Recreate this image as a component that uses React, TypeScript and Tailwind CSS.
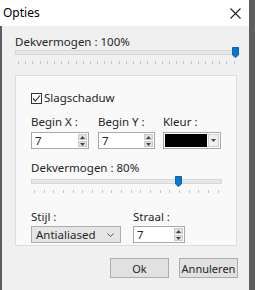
import React from 'react';

const Thumb = () => (
  <svg width="7" height="11" viewBox="0 0 7 11" className="absolute top-0">
    <path d="M0.5 0.5 H6.5 V8 L3.5 10.5 L0.5 8 Z" fill="#0078d7" stroke="#1b5ea6" strokeWidth="1" />
  </svg>
);

type SliderProps = { width: number; ticks: number; pos: number };

const Slider = ({ width, ticks, pos }: SliderProps) => {
  return (
    <div className="flex flex-col" style={{ width }}>
      <div className="relative h-[11px]">
        <div className="absolute left-0 right-0 top-[3px] h-[5px] bg-[#e7e7e7] border border-[#d6d6d6]" />
        <div className="absolute top-0" style={{ left: pos }}>
          <Thumb />
        </div>
      </div>
      <div className="flex justify-between mt-[3px] px-[3px]">
        {Array.from({ length: ticks }).map((_, i) => (
          <div key={i} className="w-px h-[3px] bg-[#c4c4c4]" />
        ))}
      </div>
    </div>
  );
};

const Spin = () => (
  <div className="flex flex-col w-[9px] h-full gap-px py-px">
    <div className="flex-1 bg-[#e3e3e3] border border-[#c9c9c9] flex items-center justify-center">
      <svg width="5" height="3" viewBox="0 0 5 3"><path d="M0 3 L2.5 0 L5 3 Z" fill="#444" /></svg>
    </div>
    <div className="flex-1 bg-[#e3e3e3] border border-[#c9c9c9] flex items-center justify-center">
      <svg width="5" height="3" viewBox="0 0 5 3"><path d="M0 0 L2.5 3 L5 0 Z" fill="#444" /></svg>
    </div>
  </div>
);

const NumInput = ({ w, value }: { w: number; value: string }) => (
  <div className="h-[17px] bg-white border border-[#a9a9a9] flex items-center pl-[3px] pr-px" style={{ width: w }}>
    <span className="flex-1 leading-none">{value}</span>
    <Spin />
  </div>
);

const App = () => {
  return (
    <div className="w-[255px] h-[290px] flex bg-[#5e5e5e] text-[11.5px] text-[#262626] font-['Noto_Sans',sans-serif] overflow-hidden">
      <div className="w-[249px] flex flex-col">
        {/* title bar */}
        <div className="h-[26px] bg-white flex items-center justify-between pl-[3px] pr-[8px] shrink-0">
          <span className="text-[12px] text-black">Opties</span>
          <svg width="11" height="11" viewBox="0 0 11 11">
            <path d="M0.5 0.5 L10.5 10.5 M10.5 0.5 L0.5 10.5" stroke="#222" strokeWidth="1.1" />
          </svg>
        </div>

        <div className="flex-1 flex">
          <div className="w-[2px] bg-[#5e5e5e]" />
          <div className="flex-1 bg-[#f0f0f0] flex flex-col pl-[13px] pt-[9px]">
            <div className="leading-[14px]">Dekvermogen : 100%</div>
            <div className="mt-[-2px]">
              <Slider width={223} ticks={31} pos={217} />
            </div>

            {/* group panel */}
            <div className="mt-[11px] w-[222px] h-[171px] bg-[#f9f9f9] border border-[#dcdcdc] pl-[15px] pt-[16px] flex flex-col">
              <div className="flex items-center gap-[2px] h-[12px]">
                <div className="w-[11px] h-[11px] border border-[#333] bg-white flex items-center justify-center">
                  <svg width="9" height="9" viewBox="0 0 9 9">
                    <path d="M1 4.5 L3.5 7 L8 1.5" stroke="#222" strokeWidth="1.1" fill="none" />
                  </svg>
                </div>
                <span>Slagschaduw</span>
              </div>

              <div className="flex mt-[11px]">
                <div className="w-[67px] flex flex-col gap-[3px]">
                  <span className="leading-[14px]">Begin X :</span>
                  <NumInput w={58} value="7" />
                </div>
                <div className="w-[65px] flex flex-col gap-[3px]">
                  <span className="leading-[14px]">Begin Y :</span>
                  <NumInput w={57} value="7" />
                </div>
                <div className="flex flex-col gap-[3px]">
                  <span className="leading-[14px]">Kleur :</span>
                  <div className="w-[58px] h-[17px] bg-white border border-[#a9a9a9] flex items-center p-px gap-px">
                    <div className="w-[42px] h-full bg-black" />
                    <div className="flex-1 h-full bg-[#f0f0f0] border border-[#d0d0d0] flex items-center justify-center">
                      <svg width="5" height="3" viewBox="0 0 5 3"><path d="M0 0 L2.5 3 L5 0 Z" fill="#444" /></svg>
                    </div>
                  </div>
                </div>
              </div>

              <div className="mt-[12px] leading-[14px]">Dekvermogen : 80%</div>
              <div className="mt-[1px]">
                <Slider width={191} ticks={20} pos={144} />
              </div>

              <div className="flex mt-[17px]">
                <div className="w-[102px] flex flex-col gap-[2px]">
                  <span className="leading-[14px]">Stijl :</span>
                  <div className="w-[90px] h-[17px] bg-[#e5e5e5] border border-[#adadad] flex items-center justify-between pl-[4px] pr-[6px]">
                    <span className="leading-none">Antialiased</span>
                    <svg width="7" height="4" viewBox="0 0 7 4">
                      <path d="M0.5 0.5 L3.5 3.5 L6.5 0.5" stroke="#555" strokeWidth="1" fill="none" />
                    </svg>
                  </div>
                </div>
                <div className="flex flex-col gap-[2px]">
                  <span className="leading-[14px]">Straal :</span>
                  <NumInput w={52} value="7" />
                </div>
              </div>
            </div>

            <div className="flex justify-end gap-[10px] mt-[12px] pr-[11px]">
              <button className="w-[59px] h-[20px] bg-[#e1e1e1] border border-[#adadad] leading-none text-[11px]">Ok</button>
              <button className="w-[59px] h-[20px] bg-[#e1e1e1] border border-[#adadad] leading-none text-[11px]">Annuleren</button>
            </div>
          </div>
        </div>
      </div>
      <div className="flex-1 bg-[#5e5e5e]" />
    </div>
  );
};

export default App;
